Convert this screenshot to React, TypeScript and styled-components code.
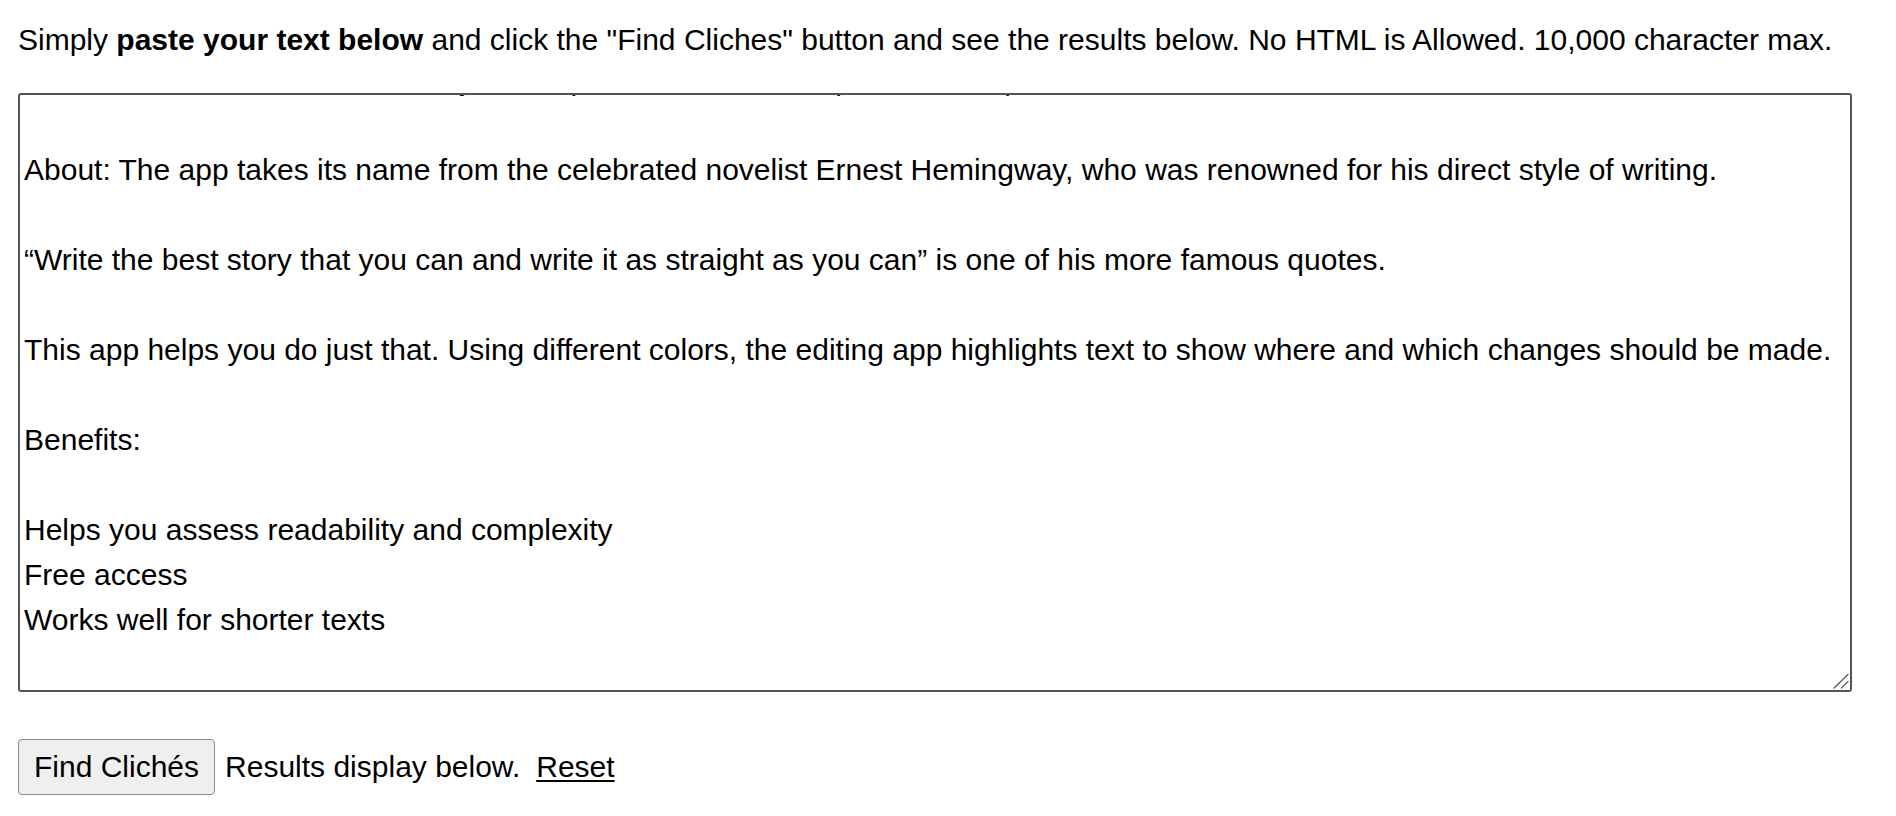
import React, { useLayoutEffect, useRef } from "react";
import styled, { createGlobalStyle } from "styled-components";

const GlobalStyle = createGlobalStyle`
  html, body {
    margin: 0;
    padding: 0;
    background: #ffffff;
  }
  body {
    font-family: "Liberation Sans", Arial, Helvetica, sans-serif;
    color: #000000;
  }
`;

const Page = styled.main`
  padding: 17px 0 0 18px;
  font-family: "Liberation Sans", Arial, Helvetica, sans-serif;
  font-size: 30px;
  color: #000;
`;

const Intro = styled.p`
  margin: 0;
  line-height: 45px;
  white-space: nowrap;
`;

const EditorFrame = styled.div`
  position: relative;
  width: 1834px;
  margin-top: 31px;
`;

const Editor = styled.textarea`
  display: block;
  box-sizing: border-box;
  width: 1834px;
  height: 599px;
  padding: 2px 2px 2px 4px;
  border: 2px solid #545454;
  border-radius: 3px;
  background: #ffffff;
  color: #000000;
  font-family: "Liberation Sans", Arial, Helvetica, sans-serif;
  font-size: 30px;
  line-height: 45px;
  resize: both;
  outline: none;
  scrollbar-width: none;
  white-space: pre-wrap;
  &::-webkit-scrollbar {
    display: none;
  }
`;

const Grip = styled.svg`
  position: absolute;
  right: 2px;
  bottom: 2px;
  width: 18px;
  height: 18px;
  pointer-events: none;
  background: #ffffff;
`;

const ActionRow = styled.div`
  display: flex;
  align-items: center;
  margin-top: 47px;
  line-height: 34px;
`;

const FindButton = styled.button`
  box-sizing: border-box;
  height: 56px;
  padding: 10px 15px;
  border: 1px solid #8a8a8a;
  border-radius: 4px;
  background: #efefef;
  color: #000;
  font-family: "Liberation Sans", Arial, Helvetica, sans-serif;
  font-size: 30px;
  line-height: 34px;
  cursor: pointer;
`;

const Note = styled.span<{ $gap: number }>`
  margin-left: ${(p) => p.$gap}px;
  white-space: pre;
`;

const ResetLink = styled.a`
  color: #000;
  text-decoration: underline;
  text-decoration-thickness: 2px;
  text-underline-offset: 3px;
  cursor: pointer;
`;

const TEXT = [
  "Cost: Free to use online. The only desktop version is $19.99 (Mac and PC).",
  "",
  "About: The app takes its name from the celebrated novelist Ernest Hemingway, who was renowned for his direct style of writing.",
  "",
  "\u201CWrite the best story that you can and write it as straight as you can\u201D is one of his more famous quotes.",
  "",
  "This app helps you do just that. Using different colors, the editing app highlights text to show where and which changes should be made.",
  "",
  "Benefits:",
  "",
  "Helps you assess readability and complexity",
  "Free access",
  "Works well for shorter texts",
  "",
  "",
].join("\n");

export default function App() {
  const ref = useRef<HTMLTextAreaElement>(null);

  useLayoutEffect(() => {
    if (ref.current) ref.current.scrollTop = 40;
  }, []);

  return (
    <Page>
      <GlobalStyle />
      <Intro>
        Simply <b>paste your text below</b> and click the "Find Cliches" button and see
        the results below. No HTML is Allowed. 10,000 character max.
      </Intro>
      <EditorFrame>
        <Editor ref={ref} defaultValue={TEXT} spellCheck={false} />
        <Grip viewBox="0 0 18 18" aria-hidden="true">
          <line x1="2" y1="16" x2="16" y2="2.5" stroke="#5a5a5a" strokeWidth="1.3" strokeLinecap="round" />
          <line x1="9.5" y1="16" x2="16" y2="9.5" stroke="#5a5a5a" strokeWidth="1.3" strokeLinecap="round" />
        </Grip>
      </EditorFrame>
      <ActionRow>
        <FindButton type="button">Find Clichés</FindButton>
        <Note $gap={10}>Results display below.</Note>
        <Note $gap={16}>
          <ResetLink>Reset</ResetLink>
        </Note>
      </ActionRow>
    </Page>
  );
}
